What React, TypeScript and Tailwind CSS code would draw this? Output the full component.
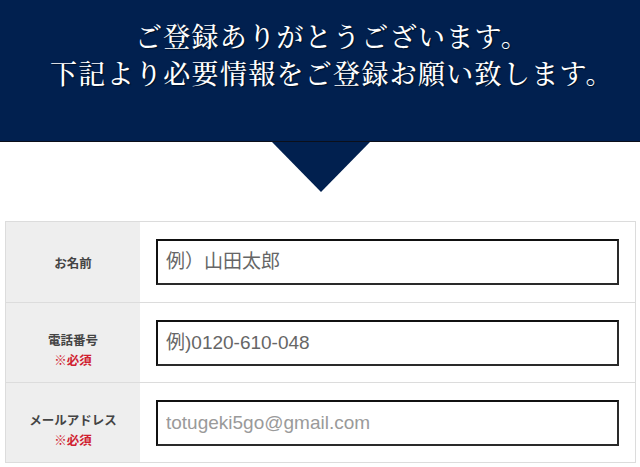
import React from 'react';

const rows = [
  { label: 'お名前', required: false, placeholder: '例）山田太郎', tone: 'placeholder:text-[#666]' },
  { label: '電話番号', required: true, placeholder: '例)0120-610-048', tone: 'placeholder:text-[#666]' },
  { label: 'メールアドレス', required: true, placeholder: 'totugeki5go@gmail.com', tone: 'placeholder:text-[#9a9a9a]' },
];

export default function App() {
  return (
    <div className="min-h-[467px] w-[640px] bg-white overflow-hidden" style={{ fontFamily: '"Noto Sans CJK JP", sans-serif' }}>
      {/* banner */}
      <div className="relative">
        <div className="h-[142px] bg-[#01204f] border-b border-[#0b0f1a] pt-[17px] pl-[24px] flex flex-col items-center">
          <p
            className="text-white text-[27px] leading-[37px] tracking-[1.3px] font-medium [text-shadow:1px_1px_1px_rgba(0,0,0,0.55)]"
            style={{ fontFamily: '"Noto Serif CJK JP", "Noto Sans CJK JP", serif' }}
          >
            ご登録ありがとうございます。
          </p>
          <p
            className="text-white text-[27px] leading-[37px] tracking-[1.3px] font-medium [text-shadow:1px_1px_1px_rgba(0,0,0,0.55)]"
            style={{ fontFamily: '"Noto Serif CJK JP", "Noto Sans CJK JP", serif' }}
          >
            下記より必要情報をご登録お願い致します。
          </p>
        </div>
        <div className="absolute left-[272px] top-[142px] w-0 h-0 border-t-[50px] border-t-[#01204f] border-x-[49px] border-x-transparent" />
      </div>

      {/* form */}
      <div className="pt-[79px] px-[5px]">
        <div className="w-[631px] border border-[#dcdcdc]">
          {rows.map((r, i) => (
            <div key={r.label} className={`flex h-[80px] ${i > 0 ? 'border-t border-[#dcdcdc]' : ''}`}>
              <div className={`w-[134px] bg-[#eeeeee] flex flex-col items-center justify-center gap-[3px] ${r.required ? 'pt-[14px]' : ''}`}>
                <span className="text-[12.5px] leading-[17px] font-bold text-[#444]">{r.label}</span>
                {r.required && <span className="text-[12.5px] leading-[17px] font-bold text-[#d0202f]">※必須</span>}
              </div>
              <div className="flex-1 flex items-center px-[16px]">
                <input
                  type="text"
                  placeholder={r.placeholder}
                  className={`w-[463px] h-[46px] border-2 border-t-[#111] border-l-[#111] border-b-[#2a2a2a] border-r-[#2a2a2a] px-[8px] text-[19px] outline-none ${r.tone}`}
                  style={{ fontFamily: '"Liberation Sans", "Noto Sans CJK JP", sans-serif' }}
                />
              </div>
            </div>
          ))}
        </div>
      </div>
    </div>
  );
}
